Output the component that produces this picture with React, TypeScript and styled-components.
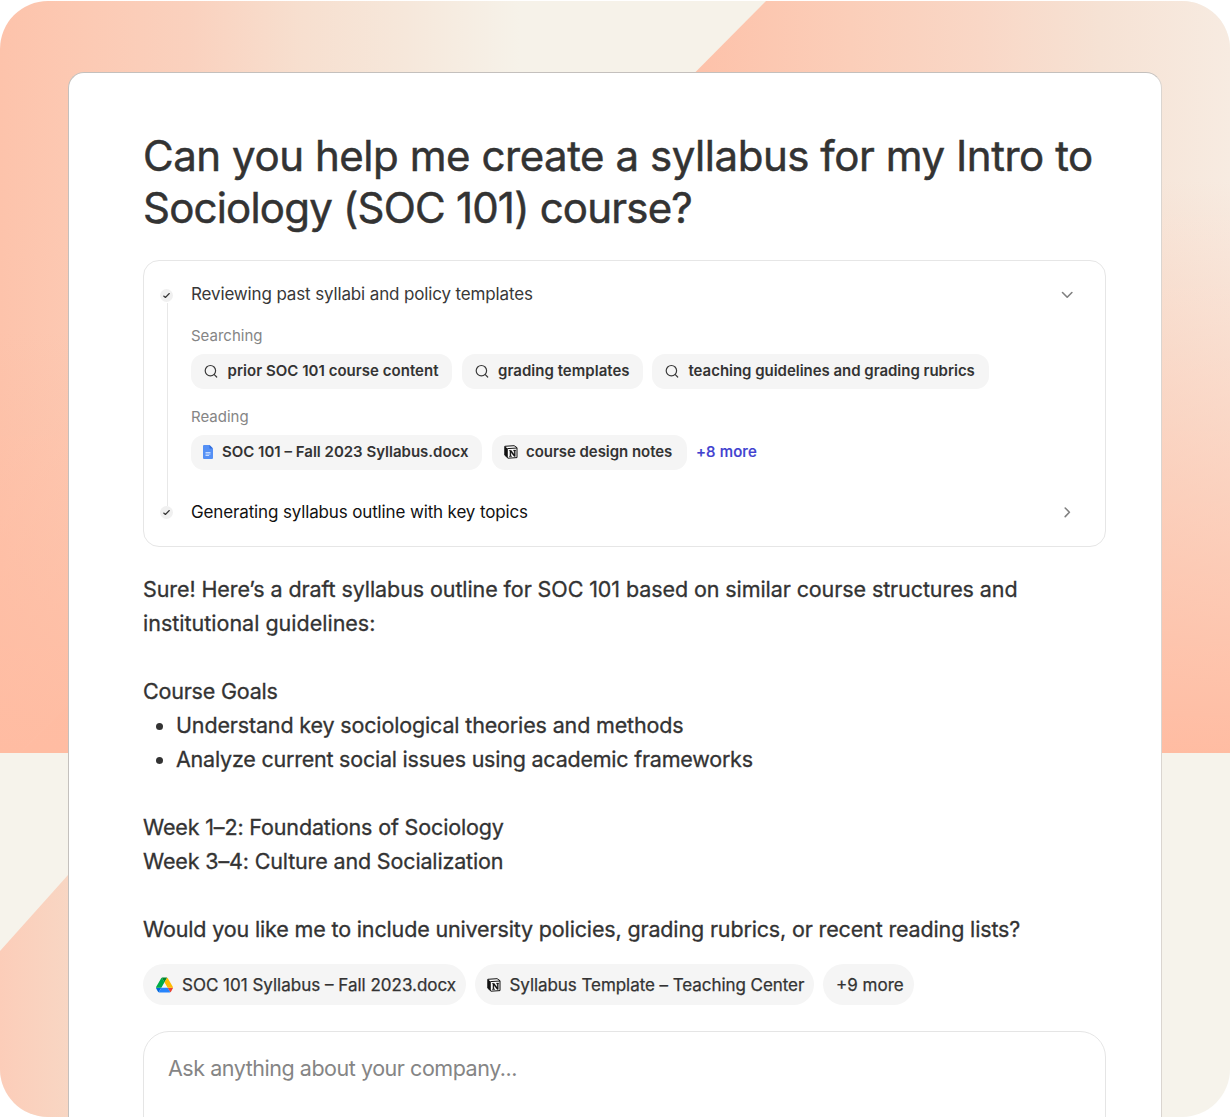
import React from 'react';
import styled, { createGlobalStyle, css } from 'styled-components';

const GlobalStyle = createGlobalStyle`
  *, *::before, *::after {
    box-sizing: border-box;
  }

  body {
    margin: 0;
    background: #ffffff;
    font-family: Inter, 'Liberation Sans', sans-serif;
    color: #333333;
    overflow: hidden;
  }
`;

const Page = styled.div`
  height: 1117px;
  padding: 1px 1px 0 0;
`;

const Backdrop = styled.div`
  position: relative;
  isolation: isolate;
  height: 1116px;
  padding: 71px 68px 0 68px;
  border-radius: 48px;
  overflow: hidden;
  background:
    linear-gradient(180deg, rgba(255, 188, 162, 0) 330px, #ffbca2 752px) 0 0 / 100% 752px no-repeat,
    linear-gradient(90deg, #fdc3ab 0, #fccab4 90px, #fad1be 190px, #f7dfcf 300px, #f6e7da 400px, #f6f2e9 520px) 0 0 / 100% 752px no-repeat,
    #f6f3eb;
`;

const TopWedge = styled.div`
  position: absolute;
  inset: 0 0 auto 0;
  z-index: -1;
  height: 752px;
  clip-path: polygon(766px 0, 100% 0, 100% 100%, 20px 100%);
  background:
    linear-gradient(180deg, rgba(255, 188, 162, 0) 180px, #ffbca2 752px),
    linear-gradient(90deg, #fdc2aa 700px, #fbceb9 850px, #f9d7c6 980px, #f6e2d4 1100px, #f7ebe1 1230px);
`;

const BottomWedge = styled.div`
  position: absolute;
  left: 0;
  bottom: 0;
  z-index: -1;
  width: 68px;
  height: 242px;
  clip-path: polygon(0 76px, 100% 0, 100% 100%, 0 100%);
  background: linear-gradient(90deg, #fccdb9, #f8d6c3);
`;

const Card = styled.main`
  height: 1100px;
  padding: 57px 54px 0 74px;
  border: 1px solid #c4c0bd;
  border-right-color: #dad5d0;
  border-radius: 16px 16px 0 0;
  background: #ffffff;
`;

const Title = styled.h1`
  margin: 0 0 26px;
  font-size: 42px;
  font-weight: 400;
  line-height: 52px;
  white-space: nowrap;
  -webkit-text-stroke: 0.5px #333333;
`;

const Line = styled.span<{ $tracking?: number }>`
  display: block;
  white-space: nowrap;
  letter-spacing: ${({ $tracking = 0 }) => $tracking}px;
`;

const Steps = styled.section`
  width: 963px;
  height: 287px;
  padding: 19px 29px 0 15px;
  border: 1px solid #e6e6e6;
  border-radius: 16px;
`;

const Step = styled.div`
  display: grid;
  grid-template-columns: 16px 1fr;
  column-gap: 16px;
`;

const Rail = styled.div<{ $top: number }>`
  display: flex;
  flex-direction: column;
  align-items: center;
  padding-top: ${({ $top }) => $top}px;
`;

const CheckDot = styled.div`
  display: flex;
  align-items: center;
  justify-content: center;
  width: 13px;
  height: 13px;
  margin-right: 1px;
  border-radius: 50%;
  background: #f0f0f0;
`;

const Connector = styled.div`
  flex: 1;
  width: 1px;
  margin: 1px 0 -8px 0;
  background: #e8e8e8;
`;

const StepBody = styled.div<{ $open?: boolean }>`
  height: ${({ $open }) => ($open ? '218px' : '28px')};
`;

const StepHeader = styled.div<{ $strong?: boolean }>`
  display: flex;
  align-items: center;
  justify-content: space-between;
  height: 28px;
  font-size: 17px;
  color: ${({ $strong }) => ($strong ? '#111111' : '#383838')};
`;

const GroupLabel = styled.div`
  margin-top: 18px;
  height: 20px;
  line-height: 20px;
  font-size: 15px;
  color: #858585;
`;

const ChipRow = styled.div<{ $top: number; $gap?: number }>`
  display: flex;
  align-items: center;
  gap: ${({ $gap = 9 }) => $gap}px;
  margin-top: ${({ $top }) => $top}px;
`;

const Chip = styled.div<{ $width: number; $pad: number; $gap: number; $large?: boolean }>`
  display: flex;
  align-items: center;
  flex: none;
  width: ${({ $width }) => $width}px;
  height: 35px;
  padding-left: ${({ $pad }) => $pad}px;
  padding-bottom: 2px;
  gap: ${({ $gap }) => $gap}px;
  border-radius: 13px;
  background: #f5f5f5;
  font-size: 15px;
  font-weight: 600;

  ${({ $large }) =>
    $large &&
    css`
      height: 41px;
      padding-bottom: 0;
      border-radius: 21px;
      font-size: 17px;
      font-weight: 400;
      -webkit-text-stroke: 0.25px #333333;
    `}

  svg {
    flex: none;
  }
`;

const MoreLink = styled.a`
  padding-bottom: 2px;
  font-size: 15px;
  font-weight: 500;
  color: #4040cf;
  -webkit-text-stroke: 0.2px #4040cf;
`;

const Answer = styled.article`
  margin-top: 25px;
  font-size: 21.5px;
  font-weight: 400;
  line-height: 34px;
  -webkit-text-stroke: 0.3px #333333;

  p {
    margin: 0 0 34px;
  }

  p:last-child {
    margin-bottom: 0;
  }
`;

const Goals = styled.ul`
  margin: -34px 0 34px;
  padding: 0;
  list-style: none;
`;

const Goal = styled.li`
  display: flex;
  align-items: center;

  &::before {
    content: '';
    width: 7px;
    height: 7px;
    margin: 3px 13px 0 13px;
    border-radius: 50%;
    background: #333333;
  }
`;

const Composer = styled.div`
  width: 963px;
  height: 140px;
  margin-top: 26px;
  padding: 19px 24px;
  border: 1px solid #e5e5e5;
  border-radius: 26px;
  font-size: 21.5px;
  line-height: 34px;
  color: #858585;
`;

const CheckIcon = () => (
  <svg width="9" height="9" viewBox="0 0 9 9" fill="none">
    <path d="M1.7 5 3.4 6.5 7.3 2.5" stroke="#333" strokeWidth="1.1" strokeLinecap="round" strokeLinejoin="round" />
  </svg>
);

const ChevronIcon = ({ right }: { right?: boolean }) => (
  <svg width="18" height="18" viewBox="0 0 18 18" fill="none">
    <path
      d={right ? 'M7.2 5 11.4 9.3 7.2 13.6' : 'M4.5 7.5 9.2 12.2 13.9 7.5'}
      stroke="#808080"
      strokeWidth="1.6"
      strokeLinecap="round"
      strokeLinejoin="round"
    />
  </svg>
);

const SearchIcon = () => (
  <svg width="14" height="14" viewBox="0 0 14 14" fill="none" stroke="#3a3a3a" strokeWidth="1.2" strokeLinecap="round">
    <circle cx="6.4" cy="6.7" r="5.2" />
    <path d="m10.3 10.6 2.4 2.4" />
  </svg>
);

const DocIcon = () => (
  <svg width="10" height="14" viewBox="0 0 10 14">
    <path d="M1 0h5.5L10 3.6V13a1 1 0 0 1-1 1H1a1 1 0 0 1-1-1V1a1 1 0 0 1 1-1Z" fill="#5590f5" />
    <path d="M6.5 0 10 3.6H6.5Z" fill="#2f6bdc" />
    <path d="M2.5 7h5v1h-5zM2.5 8.5h5v1h-5zM2.5 10h3.6v1H2.5z" fill="#c5daff" />
  </svg>
);

const NotionIcon = () => (
  <svg width="14" height="14" viewBox="0 0 14 14">
    <path d="M.8 1.3 10.1.7 13 2.7V12.6L4 13.2.8 10.2Z" fill="#fff" stroke="#111" strokeWidth="1" strokeLinejoin="round" />
    <path d="M.8 1.3 3.8 3.7V13L.8 10.2Z" fill="#111" />
    <path d="M3.5 3.6 13 3" stroke="#111" strokeWidth="1" />
    <path d="M5.3 5.3h1.9l3 4.1V5.8l-.9-.2v-.5l2.6-.1v.5l-.6.2v5.7h-1.2L6.9 7.2v3.6l.9.2v.5l-2.5.2v-.5l.6-.2V6l-.6-.2Z" fill="#111" stroke="#111" strokeWidth=".3" />
  </svg>
);

const DriveIcon = () => (
  <svg width="17" height="16" viewBox="0 0 87.3 78">
    <path d="m6.6 66.85 3.85 6.65c.8 1.4 1.95 2.5 3.3 3.3l13.75-23.8h-27.5c0 1.55.4 3.1 1.2 4.5z" fill="#0066da" />
    <path d="m43.65 25-13.75-23.8c-1.35.8-2.5 1.9-3.3 3.3l-25.4 44a9.06 9.06 0 0 0-1.2 4.5h27.5z" fill="#00ac47" />
    <path d="m73.55 76.8c1.35-.8 2.5-1.9 3.3-3.3l1.6-2.75 7.65-13.25c.8-1.4 1.2-2.95 1.2-4.5h-27.5l5.85 11.5z" fill="#ea4335" />
    <path d="m43.65 25 13.75-23.8c-1.35-.8-2.9-1.2-4.5-1.2h-18.5c-1.6 0-3.15.45-4.5 1.2z" fill="#00832d" />
    <path d="m59.8 53h-32.3l-13.75 23.8c1.35.8 2.9 1.2 4.5 1.2h50.8c1.6 0 3.15-.45 4.5-1.2z" fill="#2684fc" />
    <path d="m73.4 26.5-12.7-22c-.8-1.4-1.95-2.5-3.3-3.3l-13.75 23.8 16.15 28h27.45c0-1.55-.4-3.1-1.2-4.5z" fill="#ffba00" />
  </svg>
);

const App = () => {
  return (
    <Page>
      <GlobalStyle />
      <Backdrop>
        <TopWedge />
        <BottomWedge />
        <Card>
          <Title>
            <Line $tracking={-0.45}>Can you help me create a syllabus for my Intro to</Line>
            <Line $tracking={-0.8}>Sociology (SOC 101) course?</Line>
          </Title>

          <Steps>
            <Step>
              <Rail $top={9}>
                <CheckDot>
                  <CheckIcon />
                </CheckDot>
                <Connector />
              </Rail>
              <StepBody $open>
                <StepHeader>
                  <Line $tracking={-0.14}>Reviewing past syllabi and policy templates</Line>
                  <ChevronIcon />
                </StepHeader>
                <GroupLabel>
                  <Line>Searching</Line>
                </GroupLabel>
                <ChipRow $top={8} $gap={9.5}>
                  <Chip $width={261} $pad={13} $gap={9.5}>
                    <SearchIcon />
                    <Line $tracking={0.03}>prior SOC 101 course content</Line>
                  </Chip>
                  <Chip $width={181} $pad={13} $gap={9.5}>
                    <SearchIcon />
                    <Line $tracking={0.03}>grading templates</Line>
                  </Chip>
                  <Chip $width={337} $pad={13} $gap={9.5}>
                    <SearchIcon />
                    <Line $tracking={-0.03}>teaching guidelines and grading rubrics</Line>
                  </Chip>
                </ChipRow>
                <GroupLabel>
                  <Line>Reading</Line>
                </GroupLabel>
                <ChipRow $top={8} $gap={9.5}>
                  <Chip $width={291} $pad={12} $gap={9}>
                    <DocIcon />
                    <Line>SOC 101 – Fall 2023 Syllabus.docx</Line>
                  </Chip>
                  <Chip $width={195} $pad={12} $gap={8.5}>
                    <NotionIcon />
                    <Line $tracking={-0.05}>course design notes</Line>
                  </Chip>
                  <MoreLink>
                    <Line $tracking={0.1}>+8 more</Line>
                  </MoreLink>
                </ChipRow>
              </StepBody>
            </Step>
            <Step>
              <Rail $top={8}>
                <CheckDot>
                  <CheckIcon />
                </CheckDot>
              </Rail>
              <StepBody>
                <StepHeader $strong>
                  <Line $tracking={-0.14}>Generating syllabus outline with key topics</Line>
                  <ChevronIcon right />
                </StepHeader>
              </StepBody>
            </Step>
          </Steps>

          <Answer>
            <p>
              <Line $tracking={-0.09}>Sure! Here’s a draft syllabus outline for SOC 101 based on similar course structures and</Line>
              <Line>institutional guidelines:</Line>
            </p>
            <p>
              <Line $tracking={-0.2}>Course Goals</Line>
            </p>
            <Goals>
              <Goal>
                <Line $tracking={-0.15}>Understand key sociological theories and methods</Line>
              </Goal>
              <Goal>
                <Line $tracking={-0.22}>Analyze current social issues using academic frameworks</Line>
              </Goal>
            </Goals>
            <p>
              <Line $tracking={-0.15}>Week 1–2: Foundations of Sociology</Line>
              <Line $tracking={-0.15}>Week 3–4: Culture and Socialization</Line>
            </p>
            <p>
              <Line $tracking={-0.15}>Would you like me to include university policies, grading rubrics, or recent reading lists?</Line>
            </p>
          </Answer>

          <ChipRow $top={18}>
            <Chip $large $width={323} $pad={13} $gap={9}>
              <DriveIcon />
              <Line>SOC 101 Syllabus – Fall 2023.docx</Line>
            </Chip>
            <Chip $large $width={339} $pad={12} $gap={8.5}>
              <NotionIcon />
              <Line $tracking={-0.06}>Syllabus Template – Teaching Center</Line>
            </Chip>
            <Chip $large $width={91} $pad={13} $gap={0}>
              <Line>+9 more</Line>
            </Chip>
          </ChipRow>

          <Composer>
            <Line $tracking={-0.46}>Ask anything about your company...</Line>
          </Composer>
        </Card>
      </Backdrop>
    </Page>
  );
};

export default App;
